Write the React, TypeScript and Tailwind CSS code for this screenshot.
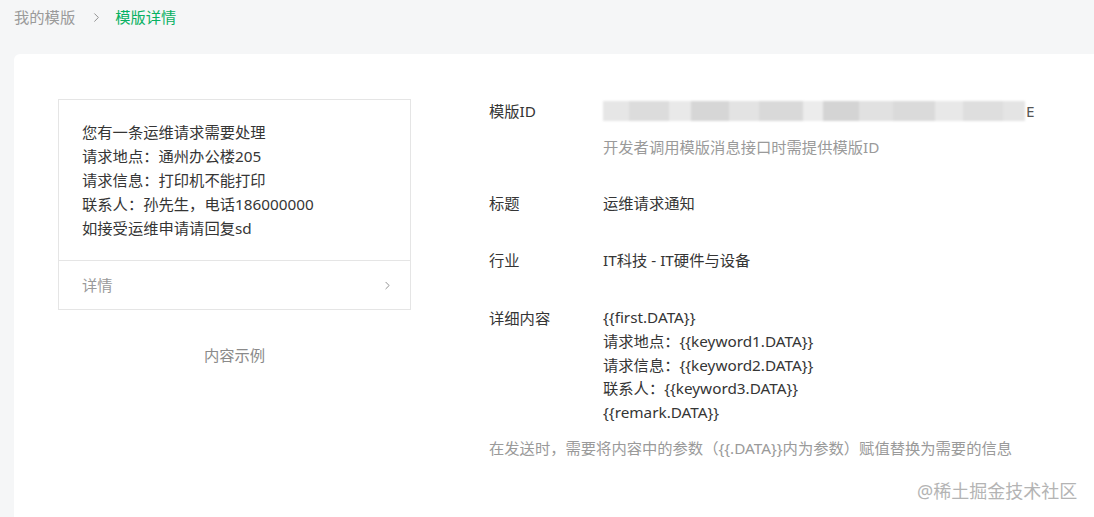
import { ChevronRight } from "lucide-react";

const font = { fontFamily: '"Noto Sans", "Noto Sans CJK SC", sans-serif' };

const previewLines = [
  "您有一条运维请求需要处理",
  "请求地点：通州办公楼205",
  "请求信息：打印机不能打印",
  "联系人：孙先生，电话186000000",
  "如接受运维申请请回复sd",
];

const contentLines = [
  "{{first.DATA}}",
  "请求地点：{{keyword1.DATA}}",
  "请求信息：{{keyword2.DATA}}",
  "联系人：{{keyword3.DATA}}",
  "{{remark.DATA}}",
];

// blurred id blocks (shade, width)
const blurBlocks: [string, number][] = [
  ["bg-[#e6e6e6]", 26], ["bg-[#dcdcdc]", 40], ["bg-[#e9e9e9]", 22], ["bg-[#d6d6d6]", 38],
  ["bg-[#e3e3e3]", 30], ["bg-[#d9d9d9]", 44], ["bg-[#ececec]", 20], ["bg-[#d4d4d4]", 36],
  ["bg-[#e1e1e1]", 34], ["bg-[#dadada]", 42], ["bg-[#e8e8e8]", 28], ["bg-[#dedede]", 40],
  ["bg-[#e4e4e4]", 22],
];

function Row({ label, children, className = "" }: { label: string; children: React.ReactNode; className?: string }) {
  return (
    <div className={`flex ${className}`}>
      <div className="w-[114px] shrink-0 text-[#353535]">{label}</div>
      <div className="flex-1">{children}</div>
    </div>
  );
}

export default function App() {
  return (
    <div className="relative h-[517px] w-[1094px] overflow-hidden bg-[#f5f6f7] text-[15.3px] leading-[24px]" style={font}>
      <div className="flex h-[54px] items-start pl-[14px] pt-[5px]">
        <span className="text-[#9a9a9a]">我的模版</span>
        <ChevronRight className="ml-[14px] mr-[11px] mt-[5px] h-[15px] w-[15px] text-[#8a8a8a]" strokeWidth={1.5} />
        <span className="text-[#07b162]">模版详情</span>
      </div>

      <div className="ml-[14px] flex h-[500px] w-[1100px] rounded-[6px] bg-white pl-[44px] pt-[45px]">
        <div className="w-[353px] shrink-0">
          <div className="border border-[#e5e5e5]">
            <div className="pl-[23px] pr-[20px] pb-[20px] pt-[20px] text-[#353535]">
              {previewLines.map((l) => (
                <div key={l}>{l}</div>
              ))}
            </div>
            <div className="flex h-[49px] items-center justify-between border-t border-[#e5e5e5] pl-[23px] pr-[16px] text-[#9a9a9a]">
              <span>详情</span>
              <ChevronRight className="h-[13px] w-[13px] text-[#7a7a7a]" strokeWidth={1.5} />
            </div>
          </div>
          <div className="mt-[33px] text-center text-[#8a8a8a]">内容示例</div>
        </div>

        <div className="ml-[78px] flex-1">
          <Row label="模版ID">
            <div className="flex items-center">
              <div className="flex h-[20px] blur-[1px]">
                {blurBlocks.map(([c, w], i) => (
                  <div key={i} className={`${c} h-[20px]`} style={{ width: w }} />
                ))}
              </div>
              <span className="ml-[1px] text-[#555]">E</span>
            </div>
            <div className="mt-[12px] text-[#9a9a9a]">开发者调用模版消息接口时需提供模版ID</div>
          </Row>
          <Row label="标题" className="mt-[32px]">
            <span className="text-[#353535]">运维请求通知</span>
          </Row>
          <Row label="行业" className="mt-[33px]">
            <span className="text-[#353535]">IT科技 - IT硬件与设备</span>
          </Row>
          <Row label="详细内容" className="mt-[34px]">
            <div className="text-[#353535]">
              {contentLines.map((l) => (
                <div key={l} className="leading-[23.75px]">{l}</div>
              ))}
            </div>
          </Row>
          <div className="mt-[11px] text-[#9a9a9a]">在发送时，需要将内容中的参数（{"{{.DATA}}"}内为参数）赋值替换为需要的信息</div>
        </div>
      </div>

      <div className="absolute left-[917px] top-[478px] text-[18px] leading-[26px] text-[#b4b4b4] [text-shadow:0_0_2px_#fff]">
        @稀土掘金技术社区
      </div>
    </div>
  );
}
